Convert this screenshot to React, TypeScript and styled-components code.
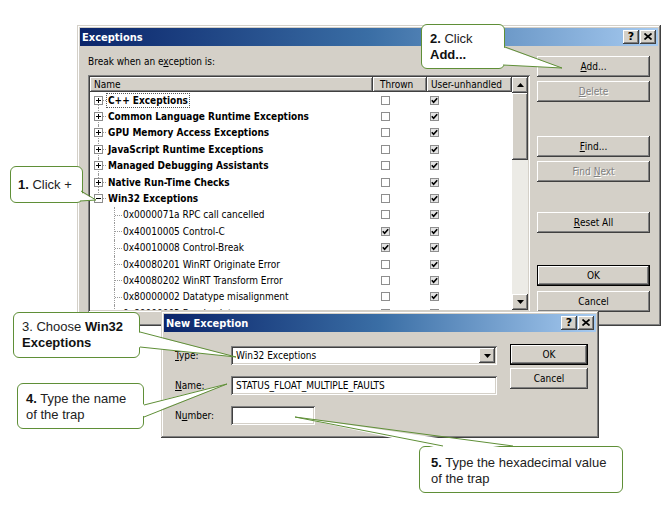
import React from "react";
import styled, { createGlobalStyle, css } from "styled-components";

const UI_FONT = `"DejaVu Sans Condensed", "DejaVu Sans", "Liberation Sans", sans-serif`;
const CALLOUT_FONT = `"Liberation Sans", Arial, sans-serif`;
const FACE = "#d4d0c8";
const GREEN = "#5f8f37";

const GlobalStyle = createGlobalStyle`
  html, body { margin: 0; padding: 0; background: #fff; }
  body { font-family: ${UI_FONT}; }
`;

const raised = css`
  background: ${FACE};
  box-shadow: inset -1px -1px #404040, inset 1px 1px #fff, inset -2px -2px #808080;
`;

const sunken = css`
  background: #fff;
  box-shadow: inset 1px 1px #808080, inset -1px -1px #fff, inset 2px 2px #404040, inset -2px -2px ${FACE};
`;

const Canvas = styled.div`
  position: relative;
  width: 669px;
  height: 509px;
  overflow: hidden;
  background: #fff;
`;

const Window = styled.div<{ $x: number; $y: number; $w: number; $h: number }>`
  position: absolute;
  left: ${(p) => p.$x}px;
  top: ${(p) => p.$y}px;
  width: ${(p) => p.$w}px;
  height: ${(p) => p.$h}px;
  box-sizing: border-box;
  padding: 3px;
  background: ${FACE};
  box-shadow: inset -1px -1px #404040, inset 1px 1px ${FACE}, inset -2px -2px #808080, inset 2px 2px #fff;
  display: flex;
  flex-direction: column;
  font-family: ${UI_FONT};
  font-size: 10px;
  color: #000;
`;

const TitleBar = styled.div`
  height: 18px;
  flex: none;
  display: flex;
  align-items: center;
  justify-content: space-between;
  padding: 0 2px 0 2px;
  background: linear-gradient(to right, #0a246a 0%, #3a6ea5 50%, #a6caf0 100%);
`;

const TitleText = styled.span`
  color: #fff;
  font-weight: bold;
  font-size: 11px;
  letter-spacing: 0;
`;

const CaptionButtons = styled.div`
  display: flex;
  gap: 1px;
`;

const CaptionButton = styled.div`
  ${raised};
  width: 16px;
  height: 14px;
  box-sizing: border-box;
  display: flex;
  align-items: center;
  justify-content: center;
  font-weight: bold;
  font-size: 11px;
  font-family: "DejaVu Sans", sans-serif;
  color: #000;
  padding-bottom: 1px;
`;

const U = styled.span`
  text-decoration: underline;
  text-underline-offset: 1px;
`;

/* ---------- main dialog ---------- */

const MainBody = styled.div`
  flex: 1;
  display: flex;
  gap: 7px;
  padding: 10px 8px 0 8px;
`;

const LeftCol = styled.div`
  width: 442px;
  display: flex;
  flex-direction: column;
`;

const FieldLabel = styled.div`
  line-height: 12px;
  height: 12px;
  margin-bottom: 7px;
`;

const ListBox = styled.div`
  ${sunken};
  height: 237px;
  box-sizing: border-box;
  padding: 2px;
  display: flex;
`;

const ListArea = styled.div`
  flex: 1;
  overflow: hidden;
  display: flex;
  flex-direction: column;
`;

const Header = styled.div`
  display: flex;
  height: 15px;
  flex: none;
`;

const HeaderCell = styled.div<{ $w: number; $pad: number }>`
  ${raised};
  width: ${(p) => p.$w}px;
  box-sizing: border-box;
  padding-left: ${(p) => p.$pad}px;
  line-height: 15px;
  white-space: nowrap;
`;

const Row = styled.div`
  display: flex;
  height: 16.4px;
  align-items: center;
  flex: none;
`;

const NameCell = styled.div`
  position: relative;
  width: 283px;
  height: 100%;
  display: flex;
  align-items: center;
  white-space: nowrap;
`;

const TopGuide = styled.div<{ $first?: boolean; $last?: boolean }>`
  position: absolute;
  left: 8px;
  top: ${(p) => (p.$first ? "50%" : "0")};
  bottom: ${(p) => (p.$last ? "50%" : "0")};
  border-left: 1px dotted #9a9a9a;
`;

const Expander = styled.div<{ $open?: boolean }>`
  position: relative;
  z-index: 1;
  margin-left: 4px;
  width: 9px;
  height: 9px;
  box-sizing: border-box;
  border: 1px solid #8c8c8c;
  background: #fff;
  flex: none;
  &::before {
    content: "";
    position: absolute;
    left: 1px;
    top: 3px;
    width: 5px;
    height: 1px;
    background: #000;
  }
  &::after {
    content: "";
    display: ${(p) => (p.$open ? "none" : "block")};
    position: absolute;
    left: 3px;
    top: 1px;
    width: 1px;
    height: 5px;
    background: #000;
  }
`;

const Stub = styled.div`
  width: 3px;
  border-top: 1px dotted #9a9a9a;
  flex: none;
`;

const ChildIndent = styled.div`
  position: relative;
  width: 31px;
  height: 100%;
  flex: none;
  &::before {
    content: "";
    position: absolute;
    left: 24px;
    top: 0;
    bottom: 0;
    border-left: 1px dotted #9a9a9a;
  }
  &::after {
    content: "";
    position: absolute;
    left: 25px;
    top: 50%;
    width: 7px;
    border-top: 1px dotted #9a9a9a;
  }
`;

const ItemLabel = styled.span<{ $bold?: boolean; $focus?: boolean }>`
  font-weight: ${(p) => (p.$bold ? "bold" : "normal")};
  padding: ${(p) => (p.$focus ? "1px 1px" : "2px 2px")};
  border: ${(p) => (p.$focus ? "1px dotted #555" : "none")};
  line-height: 11px;
`;

const CheckCell = styled.div<{ $w: number; $pad: number }>`
  width: ${(p) => p.$w}px;
  padding-left: ${(p) => p.$pad}px;
  box-sizing: border-box;
  display: flex;
  align-items: center;
`;

const Box = styled.div<{ $on?: boolean }>`
  width: 9px;
  height: 9px;
  box-sizing: border-box;
  border: 1px solid #8e8e8e;
  background: ${(p) => (p.$on ? "#e4e4e4" : "#fff")};
  display: flex;
  align-items: center;
  justify-content: center;
`;

const ScrollBar = styled.div`
  width: 16px;
  display: flex;
  flex-direction: column;
  flex: none;
`;

const ScrollButton = styled.div`
  ${raised};
  height: 16px;
  flex: none;
  display: flex;
  align-items: center;
  justify-content: center;
`;

const Thumb = styled.div`
  ${raised};
  height: 67px;
  flex: none;
`;

const Track = styled.div`
  flex: 1;
  background: #ecebe6;
`;

const ButtonCol = styled.div`
  width: 113px;
  display: flex;
  flex-direction: column;
`;

const Btn = styled.div<{ $mt?: number; $w: number; $default?: boolean; $disabled?: boolean }>`
  box-sizing: border-box;
  width: ${(p) => p.$w}px;
  height: 21px;
  flex: none;
  margin-top: ${(p) => p.$mt ?? 0}px;
  display: flex;
  align-items: center;
  justify-content: center;
  background: ${FACE};
  font-size: 10px;
  color: ${(p) => (p.$disabled ? "#808080" : "#000")};
  text-shadow: ${(p) => (p.$disabled ? "1px 1px 0 #fff" : "none")};
  box-shadow: ${(p) =>
    p.$default
      ? "inset 0 0 0 1px #000, inset -2px -2px #404040, inset 2px 2px #fff, inset -3px -3px #808080"
      : "inset -1px -1px #404040, inset 1px 1px #fff, inset -2px -2px #808080"};
`;

/* ---------- new exception dialog ---------- */

const NewBody = styled.div`
  flex: 1;
  display: flex;
  gap: 13px;
  padding: 12px 8px 0 11px;
`;

const Form = styled.div`
  display: grid;
  grid-template-columns: 56px 266px;
  grid-template-rows: 19px 19px 19px;
  row-gap: 11px;
  align-items: center;
  padding-top: 2px;
  align-self: flex-start;
`;

const FormLabel = styled.div`
  line-height: 12px;
`;

const Field = styled.div<{ $w?: number }>`
  ${sunken};
  height: 19px;
  width: ${(p) => (p.$w ? `${p.$w}px` : "100%")};
  box-sizing: border-box;
  display: flex;
  align-items: center;
  padding: 2px 2px 2px 5px;
  white-space: nowrap;
  overflow: hidden;
  justify-self: start;
`;

const ComboText = styled.span`
  flex: 1;
`;

const DropButton = styled.div`
  ${raised};
  width: 16px;
  height: 15px;
  flex: none;
  display: flex;
  align-items: center;
  justify-content: center;
`;

const SideButtons = styled.div`
  display: flex;
  flex-direction: column;
`;

/* ---------- callouts ---------- */

const Callout = styled.div<{ $x: number; $y: number; $w: number; $h: number; $pt: number; $pl: number; $center?: boolean }>`
  position: absolute;
  z-index: 5;
  left: ${(p) => p.$x}px;
  top: ${(p) => p.$y}px;
  width: ${(p) => p.$w}px;
  height: ${(p) => p.$h}px;
  box-sizing: border-box;
  padding: ${(p) => p.$pt}px 4px 0 ${(p) => p.$pl}px;
  border: 1px solid ${GREEN};
  border-radius: 6px;
  background: #fff;
  font-family: ${CALLOUT_FONT};
  font-size: 13px;
  line-height: 16px;
  color: #222;
  display: ${(p) => (p.$center ? "flex" : "block")};
  align-items: center;
`;

const B = styled.b`
  font-weight: bold;
  color: #111;
`;

const TailLayer = styled.svg`
  position: absolute;
  left: 0;
  top: 0;
  z-index: 6;
  pointer-events: none;
`;

/* ---------- icons ---------- */

const Check = () => (
  <svg width="7" height="7" viewBox="0 0 7 7">
    <polyline points="0.8,3.2 2.6,5.2 6.2,1.2" fill="none" stroke="#000" strokeWidth="1.6" />
  </svg>
);

const ArrowUp = () => (
  <svg width="7" height="4" viewBox="0 0 7 4">
    <polygon points="0,4 7,4 3.5,0" fill="#000" />
  </svg>
);

const ArrowDown = () => (
  <svg width="7" height="4" viewBox="0 0 7 4">
    <polygon points="0,0 7,0 3.5,4" fill="#000" />
  </svg>
);

const CloseX = () => (
  <svg width="8" height="7" viewBox="0 0 8 7">
    <path d="M0.5 0.5 L7.5 6.5 M7.5 0.5 L0.5 6.5" stroke="#000" strokeWidth="1.7" fill="none" />
  </svg>
);

const Caption = () => (
  <CaptionButtons>
    <CaptionButton>?</CaptionButton>
    <CaptionButton>
      <CloseX />
    </CaptionButton>
  </CaptionButtons>
);

/* ---------- data ---------- */

const groups = [
  "C++ Exceptions",
  "Common Language Runtime Exceptions",
  "GPU Memory Access Exceptions",
  "JavaScript Runtime Exceptions",
  "Managed Debugging Assistants",
  "Native Run-Time Checks",
  "Win32 Exceptions",
];

const children: [string, boolean][] = [
  ["0x0000071a RPC call cancelled", false],
  ["0x40010005 Control-C", true],
  ["0x40010008 Control-Break", true],
  ["0x40080201 WinRT Originate Error", false],
  ["0x40080202 WinRT Transform Error", false],
  ["0x80000002 Datatype misalignment", false],
  ["0x80000003 Breakpoint", false],
];

type Tail = { base: [number, number][]; fill: [number, number][]; tip: [number, number] };

const tails: Tail[] = [
  { base: [[81, 191], [80, 201]], fill: [[78, 191], [78, 201]], tip: [96, 200] },
  { base: [[505, 47], [503, 65]], fill: [[502, 47], [501, 65]], tip: [562, 68] },
  { base: [[140, 332], [140, 347]], fill: [[137, 332], [137, 347]], tip: [236, 357] },
  { base: [[144, 405], [144, 417]], fill: [[141, 405], [141, 417]], tip: [227, 384] },
  { base: [[443, 446], [513, 446]], fill: [[443, 449], [513, 449]], tip: [295, 417] },
];

const Tails = () => (
  <TailLayer width="669" height="509" viewBox="0 0 669 509">
    {tails.map((t, i) => (
      <g key={i}>
        <polygon
          points={`${t.fill[0].join(",")} ${t.tip.join(",")} ${t.fill[1].join(",")}`}
          fill="#fff"
        />
        <line x1={t.base[0][0]} y1={t.base[0][1]} x2={t.tip[0]} y2={t.tip[1]} stroke={GREEN} strokeWidth="1" />
        <line x1={t.base[1][0]} y1={t.base[1][1]} x2={t.tip[0]} y2={t.tip[1]} stroke={GREEN} strokeWidth="1" />
      </g>
    ))}
  </TailLayer>
);

/* ---------- app ---------- */

export default function App() {
  return (
    <Canvas>
      <GlobalStyle />

      <Window $x={77} $y={25} $w={584} $h={301}>
        <TitleBar>
          <TitleText>Exceptions</TitleText>
          <Caption />
        </TitleBar>
        <MainBody>
          <LeftCol>
            <FieldLabel>
              Break when an e<U>x</U>ception is:
            </FieldLabel>
            <ListBox>
              <ListArea>
                <Header>
                  <HeaderCell $w={283} $pad={4}>Name</HeaderCell>
                  <HeaderCell $w={54} $pad={7}>Thrown</HeaderCell>
                  <HeaderCell $w={85} $pad={4}>User-unhandled</HeaderCell>
                </Header>
                {groups.map((g, i) => (
                  <Row key={g}>
                    <NameCell>
                      <TopGuide $first={i === 0} $last={i === groups.length - 1} />
                      <Expander $open={i === groups.length - 1} />
                      <Stub />
                      <ItemLabel $bold $focus={i === 0}>
                        {g}
                      </ItemLabel>
                    </NameCell>
                    <CheckCell $w={54} $pad={8}>
                      <Box />
                    </CheckCell>
                    <CheckCell $w={85} $pad={3}>
                      <Box $on>
                        <Check />
                      </Box>
                    </CheckCell>
                  </Row>
                ))}
                {children.map(([name, thrown]) => (
                  <Row key={name}>
                    <NameCell>
                      <ChildIndent />
                      <ItemLabel>{name}</ItemLabel>
                    </NameCell>
                    <CheckCell $w={54} $pad={8}>
                      <Box $on={thrown}>{thrown && <Check />}</Box>
                    </CheckCell>
                    <CheckCell $w={85} $pad={3}>
                      <Box $on>
                        <Check />
                      </Box>
                    </CheckCell>
                  </Row>
                ))}
              </ListArea>
              <ScrollBar>
                <ScrollButton>
                  <ArrowUp />
                </ScrollButton>
                <Thumb />
                <Track />
                <ScrollButton>
                  <ArrowDown />
                </ScrollButton>
              </ScrollBar>
            </ListBox>
          </LeftCol>
          <ButtonCol>
            <Btn $w={113}>
              <U>A</U>dd...
            </Btn>
            <Btn $w={113} $mt={4} $disabled>
              <U>D</U>elete
            </Btn>
            <Btn $w={113} $mt={34}>
              <U>F</U>ind...
            </Btn>
            <Btn $w={113} $mt={4} $disabled>
              Find&nbsp;<U>N</U>ext
            </Btn>
            <Btn $w={113} $mt={30}>
              <U>R</U>eset All
            </Btn>
            <Btn $w={113} $mt={32} $default>
              OK
            </Btn>
            <Btn $w={113} $mt={5}>
              Cancel
            </Btn>
          </ButtonCol>
        </MainBody>
      </Window>

      <Window $x={161} $y={311} $w={438} $h={127}>
        <TitleBar>
          <TitleText>New Exception</TitleText>
          <Caption />
        </TitleBar>
        <NewBody>
          <Form>
            <FormLabel>
              <U>T</U>ype:
            </FormLabel>
            <Field>
              <ComboText>Win32 Exceptions</ComboText>
              <DropButton>
                <ArrowDown />
              </DropButton>
            </Field>
            <FormLabel>
              <U>N</U>ame:
            </FormLabel>
            <Field>STATUS_FLOAT_MULTIPLE_FAULTS</Field>
            <FormLabel>
              N<U>u</U>mber:
            </FormLabel>
            <Field $w={84} />
          </Form>
          <SideButtons>
            <Btn $w={78} $default>
              OK
            </Btn>
            <Btn $w={78} $mt={3}>
              Cancel
            </Btn>
          </SideButtons>
        </NewBody>
      </Window>

      <Callout $x={10} $y={166} $w={73} $h={37} $pt={0} $pl={7} $center>
        <span>
          <B>1.</B> Click +
        </span>
      </Callout>
      <Callout $x={421} $y={24} $w={84} $h={45} $pt={6} $pl={8}>
        <B>2.</B> Click
        <br />
        <B>Add...</B>
      </Callout>
      <Callout $x={13} $y={312} $w={127} $h={46} $pt={6} $pl={8}>
        3. Choose <B>Win32</B>
        <br />
        <B>Exceptions</B>
      </Callout>
      <Callout $x={17} $y={383} $w={127} $h={46} $pt={7} $pl={8}>
        <B>4.</B> Type the name
        <br />
        of the trap
      </Callout>
      <Callout $x={419} $y={446} $w={204} $h={47} $pt={8} $pl={11}>
        <B>5.</B> Type the hexadecimal value
        <br />
        of the trap
      </Callout>

      <Tails />
    </Canvas>
  );
}
